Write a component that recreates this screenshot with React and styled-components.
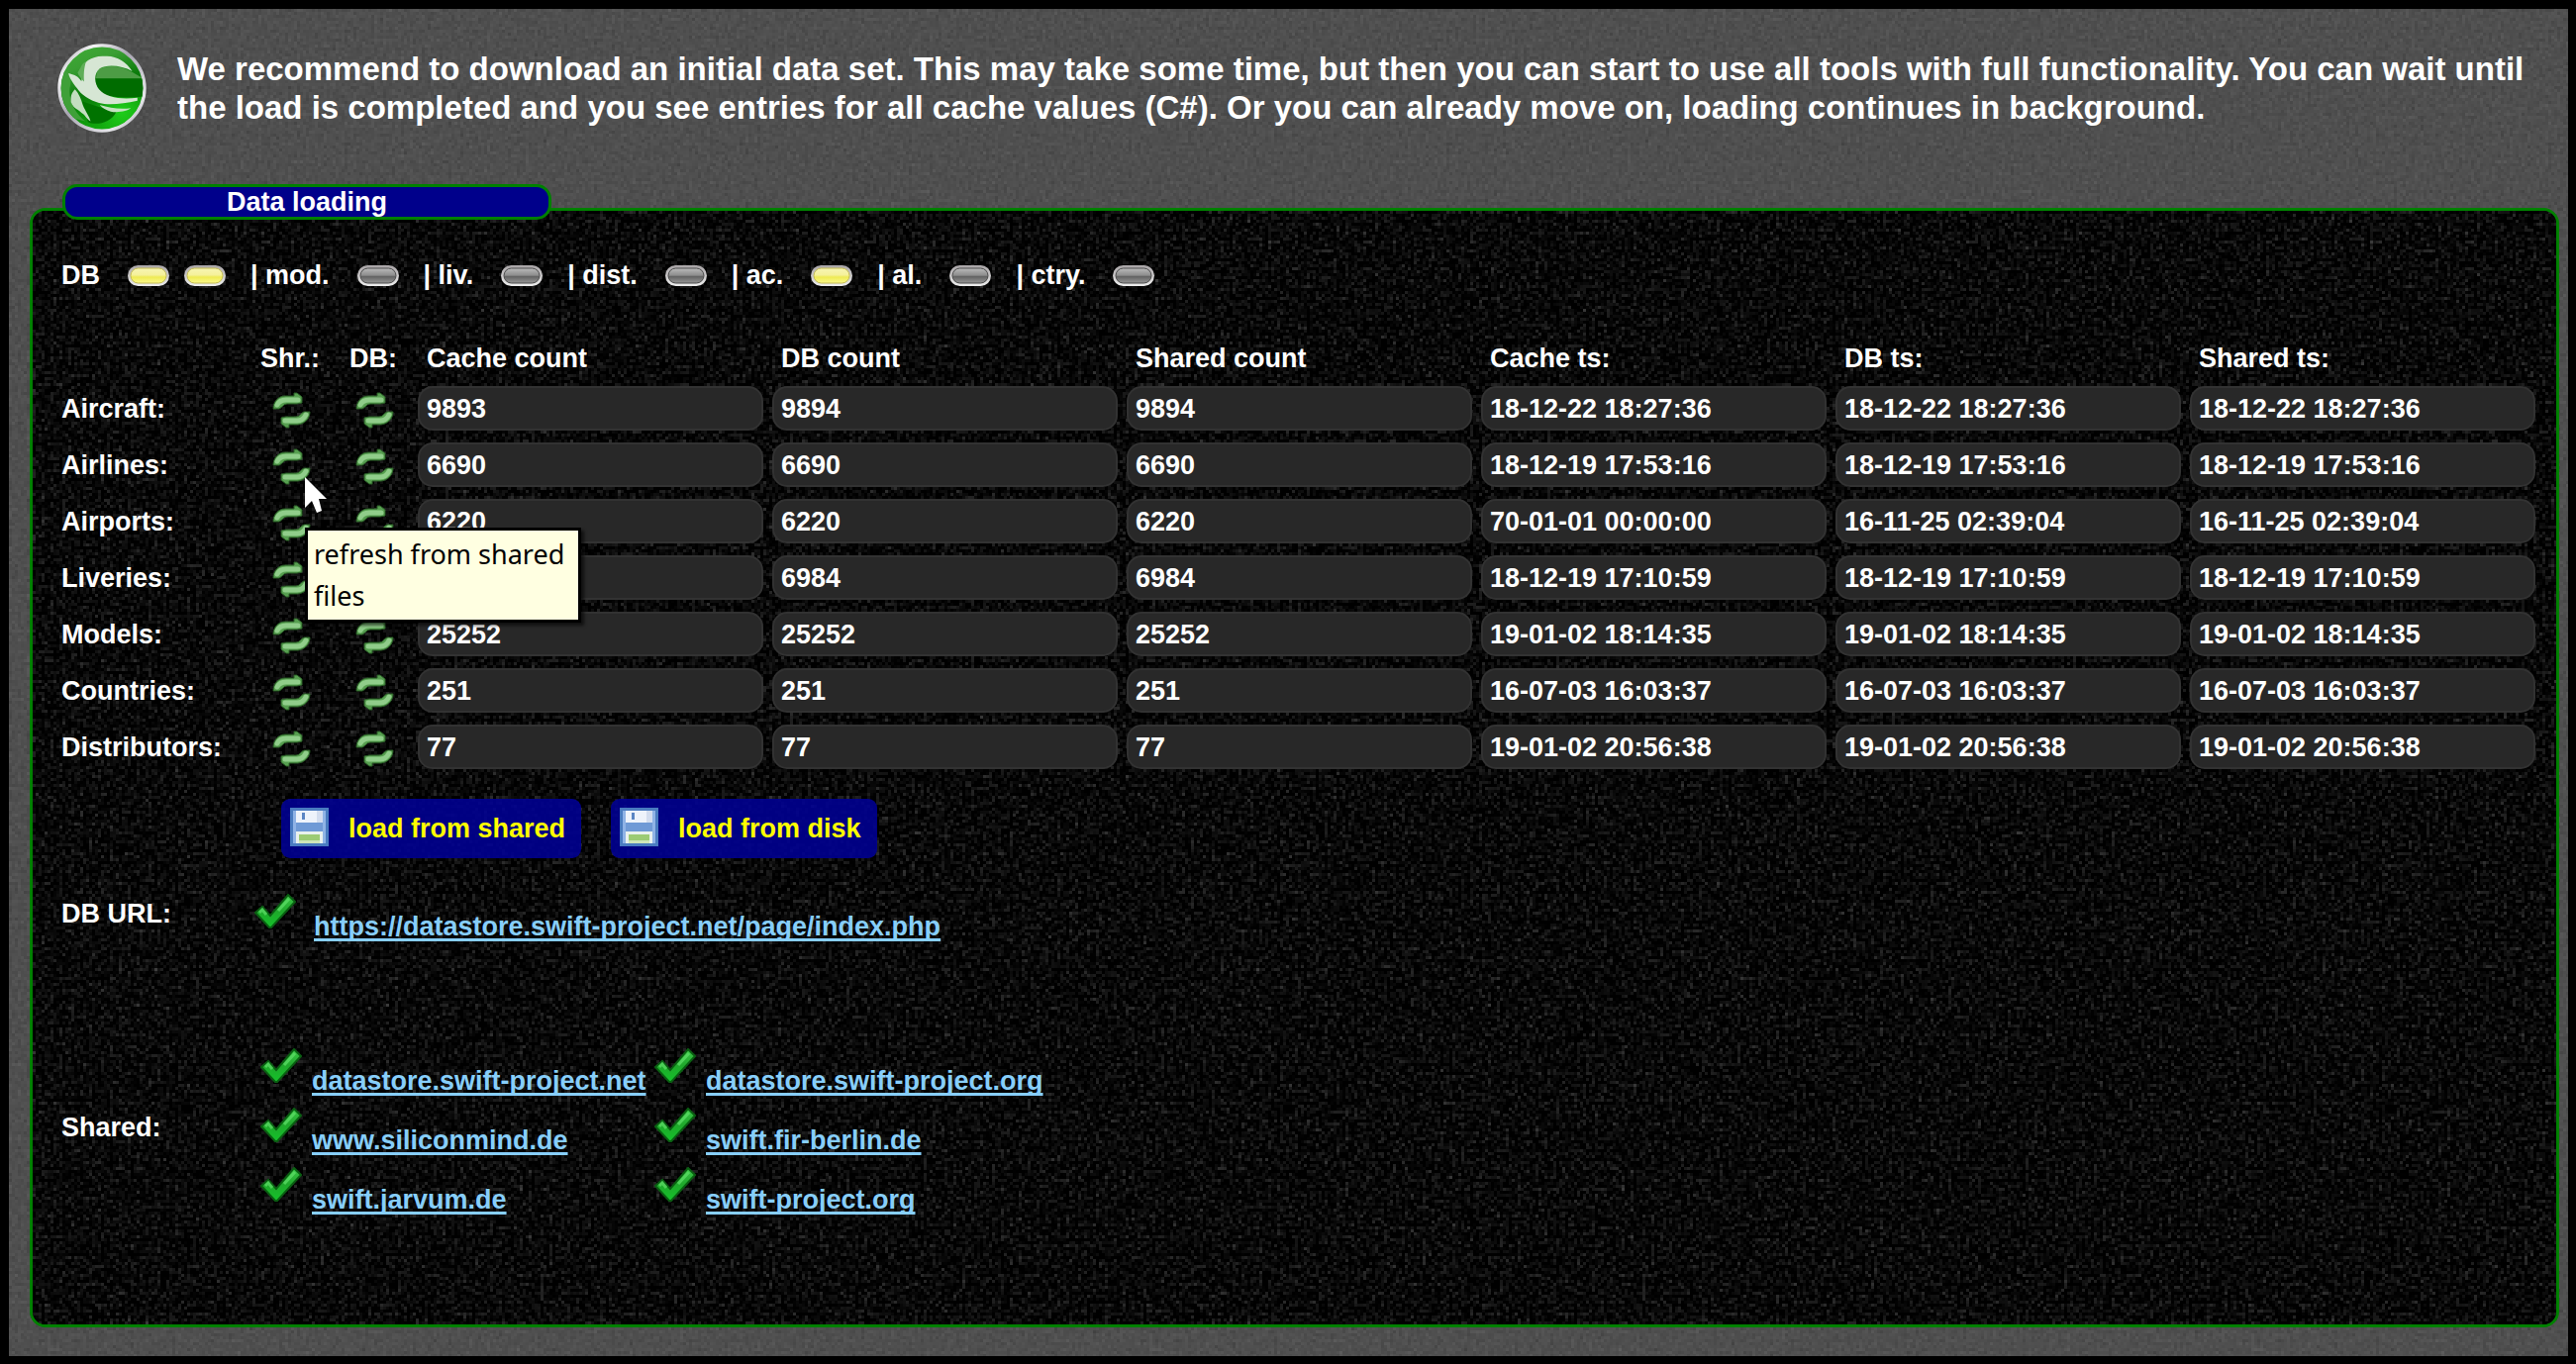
import React from "react";
import styled, { createGlobalStyle } from "styled-components";

const GlobalStyle = createGlobalStyle`
  *, *::before, *::after { box-sizing: border-box; }
  body { margin: 0; background: #000; }
`;

const Page = styled.main`
  position: relative;
  isolation: isolate;
  display: flex;
  flex-direction: column;
  min-height: 100vh;
  padding: 0 9px 29px 21px;
  border: solid #000;
  border-width: 9px 8px 8px 9px;
  background: #4f4f4f;
  color: #fff;
  font: bold 27px/31px "Liberation Sans", Arial, sans-serif;
`;

const NoiseLayer = styled.svg`
  position: absolute;
  inset: 0;
  z-index: -1;
  width: 100%;
  height: 100%;
  border-radius: ${(p) => p.$radius || "0"};
  pointer-events: none;
`;

const Intro = styled.header`
  display: flex;
  align-items: center;
  gap: 31px;
  padding: 34px 20px 51px 28px;
`;

const LogoSvg = styled.svg`
  flex: none;
  width: 90px;
  height: 92px;
`;

const IntroText = styled.p`
  margin: 0;
  font-size: 33px;
  line-height: 39px;
`;

const PanelTitle = styled.h2`
  position: relative;
  z-index: 1;
  width: 494px;
  margin: 0 0 -12px 33px;
  border: 3px solid #008000;
  border-radius: 15px;
  background: #00008b;
  font-size: 27px;
  line-height: 30px;
  text-align: center;
`;

const Panel = styled.section`
  position: relative;
  isolation: isolate;
  flex: 1;
  padding: 45px 21px 40px 29px;
  border: 3px solid #008000;
  border-radius: 16px;
  background: #000;
`;

const StatusRow = styled.div`
  display: flex;
  align-items: center;
  height: 40px;
  margin-bottom: 41px;
`;

const StatusGroup = styled.div`
  display: flex;
  align-items: center;
  gap: 15px;
  margin-right: 25px;
`;

const StatusLabel = styled.span`
  margin-right: 13px;
`;

const LedSvg = styled.svg`
  display: block;
  width: 42px;
  height: 21px;
`;

const CacheTable = styled.table`
  width: 100%;
  table-layout: fixed;
  border-collapse: collapse;
`;

const Col = styled.col`
  width: ${(p) => p.$width || "auto"};
`;

const HeadCell = styled.th`
  height: 45px;
  padding: 2px 0 0 ${(p) => (p.$field ? "18px" : "0")};
  text-align: left;
`;

const NameCell = styled.th`
  height: 57px;
  padding: 2px 0 0;
  text-align: left;
`;

const IconCell = styled.td`
  padding: 4px 0 0 ${(p) => p.$indent};
`;

const FieldCell = styled.td`
  padding: 0 0 0 9px;
`;

const Field = styled.input`
  display: block;
  width: 100%;
  height: 45px;
  padding: 2px 7px 0;
  border: 2px solid #323232;
  border-radius: 15px;
  outline: none;
  background: #282828;
  color: #fff;
  font: inherit;
`;

const IconAnchor = styled.div`
  position: relative;
  width: 39px;
  height: 37px;
`;

const RefreshButton = styled.button`
  display: block;
  padding: 0;
  border: 0;
  background: none;
  cursor: pointer;
`;

const RefreshSvg = styled.svg`
  display: block;
  width: 39px;
  height: 37px;
`;

const PointerSvg = styled.svg`
  position: absolute;
  z-index: 3;
  left: 33px;
  top: 29px;
  width: 23px;
  height: 36px;
`;

const Tooltip = styled.div`
  position: absolute;
  z-index: 2;
  left: 33px;
  top: 80px;
  width: 279px;
  padding: 3px 6px;
  border: 3px solid #000;
  background: #ffffe1;
  box-shadow: 3px 3px 3px #0009;
  color: #000;
  font: 27px/42px "Noto Sans", "Open Sans", sans-serif;
`;

const ButtonRow = styled.div`
  display: flex;
  gap: 30px;
  margin: 24px 0 0 222px;
`;

const LoadButton = styled.button`
  display: flex;
  align-items: center;
  gap: 20px;
  height: 60px;
  padding: 0 16px 0 9px;
  border: 0;
  border-radius: 9px;
  background: #000094e0;
  color: #ff0;
  font: inherit;
  cursor: pointer;
`;

const DiskSvg = styled.svg`
  width: 39px;
  height: 39px;
  margin-bottom: 3px;
`;

const LinkSection = styled.div`
  display: grid;
  grid-template-columns: ${(p) => p.$label} 1fr;
  align-items: center;
  margin-top: ${(p) => p.$top};
`;

const SectionLabel = styled.span`
  padding-bottom: 9px;
`;

const LinkGrid = styled.div`
  display: grid;
  grid-template-columns: 398px max-content;
  row-gap: 11px;
`;

const LinkItem = styled.div`
  display: flex;
  gap: ${(p) => p.$gap};
`;

const CheckSvg = styled.svg`
  flex: none;
  width: 42px;
  height: 36px;
`;

const SiteLink = styled.a`
  margin-top: 18px;
  color: #87cefa;
  text-decoration: underline;
  text-decoration-thickness: 3px;
  text-underline-offset: 3px;
  text-decoration-skip-ink: none;
`;

/* Grain in 3px blocks: every third pixel of the turbulence is kept, then grown to fill its cell. */
function Noise({ id, matrix, seed, radius }) {
  return (
    <NoiseLayer $radius={radius} aria-hidden="true">
      <filter id={id} x="0" y="0" width="100%" height="100%" colorInterpolationFilters="sRGB">
        <feTurbulence type="fractalNoise" baseFrequency="0.23" numOctaves="3" seed={seed} />
        <feColorMatrix type="matrix" values={matrix} result="grain" />
        <feFlood x="1" y="1" width="1" height="1" floodColor="#fff" />
        <feComposite in2="SourceGraphic" operator="over" x="1" y="1" width="1" height="1" result="dot" />
        <feOffset in="dot" dx="0" dy="0" x="0" y="0" width="3" height="3" />
        <feTile result="dots" />
        <feComposite in="grain" in2="dots" operator="in" />
        <feMorphology operator="dilate" radius="1" />
      </filter>
      <rect width="100%" height="100%" filter={`url(#${id})`} />
    </NoiseLayer>
  );
}

const GREY_NOISE = "0.13 0 0 0 0.245  0.13 0 0 0 0.245  0.13 0 0 0 0.245  0 0 0 0 1";
const DARK_NOISE = "0.5 0 0 0 -0.225  0.5 0 0 0 -0.225  0.5 0 0 0 -0.225  0 0 0 0 1";

function Logo() {
  return (
    <LogoSvg viewBox="24 20 274 280" role="img" aria-label="swift">
      <defs>
        <linearGradient id="logoBase" x1="0" y1="0" x2="0.4" y2="1">
          <stop offset="0" stopColor="#3fae35" />
          <stop offset="0.3" stopColor="#3a9f33" />
          <stop offset="0.6" stopColor="#0a7a0a" />
          <stop offset="1" stopColor="#12a80e" />
        </linearGradient>
        <linearGradient id="logoRim" x1="0" y1="0" x2="1" y2="1">
          <stop offset="0" stopColor="#8f8b96" />
          <stop offset="0.2" stopColor="#f4f4f6" />
          <stop offset="0.45" stopColor="#a9a6b2" />
          <stop offset="0.8" stopColor="#e6e6ea" />
          <stop offset="1" stopColor="#9a97a4" />
        </linearGradient>
        <radialGradient id="logoGlow" cx="0.74" cy="0.78" r="0.34">
          <stop offset="0" stopColor="#1fcf1b" />
          <stop offset="1" stopColor="#1fcf1b" stopOpacity="0" />
        </radialGradient>
        <clipPath id="logoClip">
          <circle cx="161" cy="160" r="126" />
        </clipPath>
      </defs>
      <circle cx="161" cy="160" r="131" fill="url(#logoBase)" stroke="url(#logoRim)" strokeWidth="10" />
      <g clipPath="url(#logoClip)">
        <circle cx="161" cy="160" r="126" fill="url(#logoGlow)" />
        <path d="M34 110C60 96 70 130 62 160C58 200 80 240 110 262L60 250L30 190Z" fill="#3fa038" />
        <path d="M148 104C170 88 216 88 256 112L290 132H142Z" fill="#4d9c45" />
        <path d="M140 130H290V186C240 192 190 190 160 176C146 164 140 148 140 130Z" fill="#006c00" />
        <path d="M100 200C140 214 170 224 205 232C190 268 140 276 118 264Z" fill="#007300" />
        <path d="M92 110C102 78 134 58 172 62C206 60 236 80 254 108C222 90 176 86 154 100C134 116 138 146 152 164C174 190 220 196 270 190V199C226 208 184 214 152 206C122 196 98 182 84 160C72 144 60 128 58 114C72 118 84 120 92 132C104 148 98 128 92 110Z" fill="#d6e6d4" />
        <path d="M86 112C96 100 98 84 112 78C108 92 104 108 106 140C98 132 90 124 86 112Z" fill="#5fae58" />
        <path d="M154 212C186 222 216 226 250 222C240 232 208 236 188 232C174 228 162 222 154 212Z" fill="#c4e2c1" />
        <path d="M78 164C90 176 96 192 102 212C110 232 122 246 126 262C112 254 108 240 98 236C88 224 76 226 66 204C64 188 66 176 78 164Z" fill="#c3dec0" />
      </g>
    </LogoSvg>
  );
}

function Led({ on }) {
  return (
    <LedSvg viewBox="0 0 42 21" role="img" aria-label={on ? "on" : "off"}>
      <defs>
        <linearGradient id="ledRim" x1="0" y1="0" x2="0" y2="1">
          <stop offset="0" stopColor="#a8a4a6" />
          <stop offset="1" stopColor="#eeeeee" />
        </linearGradient>
        <linearGradient id="ledOn" x1="0" y1="0" x2="0" y2="1">
          <stop offset="0" stopColor="#f7f5b4" />
          <stop offset="0.45" stopColor="#f5f19a" />
          <stop offset="0.6" stopColor="#eeea54" />
          <stop offset="1" stopColor="#fbf98c" />
        </linearGradient>
        <linearGradient id="ledOff" x1="0" y1="0" x2="0" y2="1">
          <stop offset="0" stopColor="#bcbcbc" />
          <stop offset="0.48" stopColor="#8c8c8c" />
          <stop offset="0.55" stopColor="#626262" />
          <stop offset="1" stopColor="#969696" />
        </linearGradient>
      </defs>
      <rect width="42" height="21" rx="10.5" fill="url(#ledRim)" />
      <rect
        x="3"
        y="3"
        width="36"
        height="15"
        rx="7.5"
        fill={on ? "url(#ledOn)" : "url(#ledOff)"}
        stroke={on ? "#c4bc50" : "#4a4a4a"}
      />
    </LedSvg>
  );
}

function RefreshIcon() {
  return (
    <RefreshSvg viewBox="0 0 39 37" aria-hidden="true">
      <g fill="#579f50" stroke="#2a5f27" strokeWidth="1">
        <path d="M1 17C1 10 6 4 13 4H22V1L25 1L30 5V11L25 12H15C11 12 10 16 7 17Z" />
        <path d="M38 20C38 27 33 32 26 33H17V36H14L9 32V26L14 25H24C28 25 29 21 32 20Z" />
      </g>
      <g fill="none" stroke="#90cd8a" strokeWidth="5" strokeLinecap="round">
        <path d="M5 13C7 9 10 8 14 8H26" />
        <path d="M34 23C32 27 29 29 25 29H13" />
      </g>
    </RefreshSvg>
  );
}

function DiskIcon() {
  return (
    <DiskSvg viewBox="0 0 39 39" aria-hidden="true">
      <rect width="39" height="39" fill="#4a7cc0" />
      <rect x="3" y="3" width="33" height="33" fill="#8fb3e6" />
      <rect x="6" y="3" width="27" height="12" fill="#eef3fb" />
      <rect x="27" y="3" width="6" height="12" fill="#d3ddef" />
      <rect x="12" y="5" width="3" height="7" fill="#5b86c4" />
      <rect x="6" y="15" width="27" height="9" fill="#6f9ad6" />
      <rect x="6" y="24" width="27" height="12" fill="#e9f1ee" />
      <rect x="9" y="27" width="21" height="6" fill="#9ccb74" />
      <rect x="9" y="33" width="21" height="3" fill="#cfe6b8" />
    </DiskSvg>
  );
}

function CheckIcon() {
  return (
    <CheckSvg viewBox="0 0 42 36" aria-hidden="true">
      <defs>
        <linearGradient id="checkFill" x1="0" y1="0" x2="0" y2="1">
          <stop offset="0" stopColor="#3cc648" />
          <stop offset="0.5" stopColor="#1fa82b" />
          <stop offset="1" stopColor="#14c22a" />
        </linearGradient>
      </defs>
      <path
        d="M1 19L8 13L16 22L34 1L41 8L17 34H15Z"
        fill="url(#checkFill)"
        stroke="#0a5f12"
        strokeWidth="2"
      />
      <path d="M5 19L8 16L12 21M24 17L35 5" fill="none" stroke="#5fe06a" strokeWidth="3" opacity="0.7" />
    </CheckSvg>
  );
}

function MousePointer() {
  return (
    <PointerSvg viewBox="0 0 23 36" aria-hidden="true">
      <path d="M0 0L22 22H14L17 34L12 36L7 24L0 31Z" fill="#fff" />
    </PointerSvg>
  );
}

const STATUS = [
  { label: "DB", leds: [true, true] },
  { label: "| mod.", leds: [false] },
  { label: "| liv.", leds: [false] },
  { label: "| dist.", leds: [false] },
  { label: "| ac.", leds: [true] },
  { label: "| al.", leds: [false] },
  { label: "| ctry.", leds: [false] },
];

const FIELDS = ["Cache count", "DB count", "Shared count", "Cache ts:", "DB ts:", "Shared ts:"];

const ROWS = [
  ["Aircraft:", "9893", "9894", "9894", "18-12-22 18:27:36", "18-12-22 18:27:36", "18-12-22 18:27:36"],
  ["Airlines:", "6690", "6690", "6690", "18-12-19 17:53:16", "18-12-19 17:53:16", "18-12-19 17:53:16"],
  ["Airports:", "6220", "6220", "6220", "70-01-01 00:00:00", "16-11-25 02:39:04", "16-11-25 02:39:04"],
  ["Liveries:", "6984", "6984", "6984", "18-12-19 17:10:59", "18-12-19 17:10:59", "18-12-19 17:10:59"],
  ["Models:", "25252", "25252", "25252", "19-01-02 18:14:35", "19-01-02 18:14:35", "19-01-02 18:14:35"],
  ["Countries:", "251", "251", "251", "16-07-03 16:03:37", "16-07-03 16:03:37", "16-07-03 16:03:37"],
  ["Distributors:", "77", "77", "77", "19-01-02 20:56:38", "19-01-02 20:56:38", "19-01-02 20:56:38"],
];

const SHARED = [
  "datastore.swift-project.net",
  "datastore.swift-project.org",
  "www.siliconmind.de",
  "swift.fir-berlin.de",
  "swift.jarvum.de",
  "swift-project.org",
];

const DB_URL = "https://datastore.swift-project.net/page/index.php";

function CacheRow({ row, hovered }) {
  const [name, ...values] = row;
  return (
    <tr>
      <NameCell scope="row">{name}</NameCell>
      <IconCell $indent="12px">
        <IconAnchor>
          <RefreshButton type="button" aria-label={`${name} refresh from shared files`}>
            <RefreshIcon />
          </RefreshButton>
          {hovered && (
            <>
              <MousePointer />
              <Tooltip role="tooltip">refresh from shared files</Tooltip>
            </>
          )}
        </IconAnchor>
      </IconCell>
      <IconCell $indent="6px">
        <RefreshButton type="button" aria-label={`${name} refresh from DB`}>
          <RefreshIcon />
        </RefreshButton>
      </IconCell>
      {values.map((value, i) => (
        <FieldCell key={FIELDS[i]}>
          <Field readOnly value={value} aria-label={`${name} ${FIELDS[i]}`} />
        </FieldCell>
      ))}
    </tr>
  );
}

export default function App() {
  return (
    <Page>
      <GlobalStyle />
      <Noise id="greyNoise" matrix={GREY_NOISE} seed="3" />
      <Intro>
        <Logo />
        <IntroText>
          We recommend to download an initial data set. This may take some time, but then you can
          start to use all tools with full functionality. You can wait until the load is completed
          and you see entries for all cache values (C#). Or you can already move on, loading
          continues in background.
        </IntroText>
      </Intro>
      <PanelTitle>Data loading</PanelTitle>
      <Panel>
        <Noise id="darkNoise" matrix={DARK_NOISE} seed="8" radius="13px" />
        <StatusRow>
          {STATUS.map(({ label, leds }) => (
            <StatusGroup key={label}>
              <StatusLabel>{label}</StatusLabel>
              {leds.map((on, i) => (
                <Led key={i} on={on} />
              ))}
            </StatusGroup>
          ))}
        </StatusRow>
        <CacheTable>
          <colgroup>
            <Col $width="201px" />
            <Col $width="90px" />
            <Col $width="60px" />
            {FIELDS.map((f) => (
              <Col key={f} />
            ))}
          </colgroup>
          <thead>
            <tr>
              <HeadCell />
              <HeadCell scope="col">Shr.:</HeadCell>
              <HeadCell scope="col">DB:</HeadCell>
              {FIELDS.map((f) => (
                <HeadCell key={f} scope="col" $field>
                  {f}
                </HeadCell>
              ))}
            </tr>
          </thead>
          <tbody>
            {ROWS.map((row, i) => (
              <CacheRow key={row[0]} row={row} hovered={i === 1} />
            ))}
          </tbody>
        </CacheTable>
        <ButtonRow>
          <LoadButton type="button">
            <DiskIcon />
            load from shared
          </LoadButton>
          <LoadButton type="button">
            <DiskIcon />
            load from disk
          </LoadButton>
        </ButtonRow>
        <LinkSection $label="195px" $top="36px">
          <SectionLabel>DB URL:</SectionLabel>
          <LinkItem $gap="18px">
            <CheckIcon />
            <SiteLink href={DB_URL}>{DB_URL}</SiteLink>
          </LinkItem>
        </LinkSection>
        <LinkSection $label="201px" $top="107px">
          <SectionLabel>Shared:</SectionLabel>
          <LinkGrid>
            {SHARED.map((host) => (
              <LinkItem key={host} $gap="10px">
                <CheckIcon />
                <SiteLink href={`https://${host}`}>{host}</SiteLink>
              </LinkItem>
            ))}
          </LinkGrid>
        </LinkSection>
      </Panel>
    </Page>
  );
}
